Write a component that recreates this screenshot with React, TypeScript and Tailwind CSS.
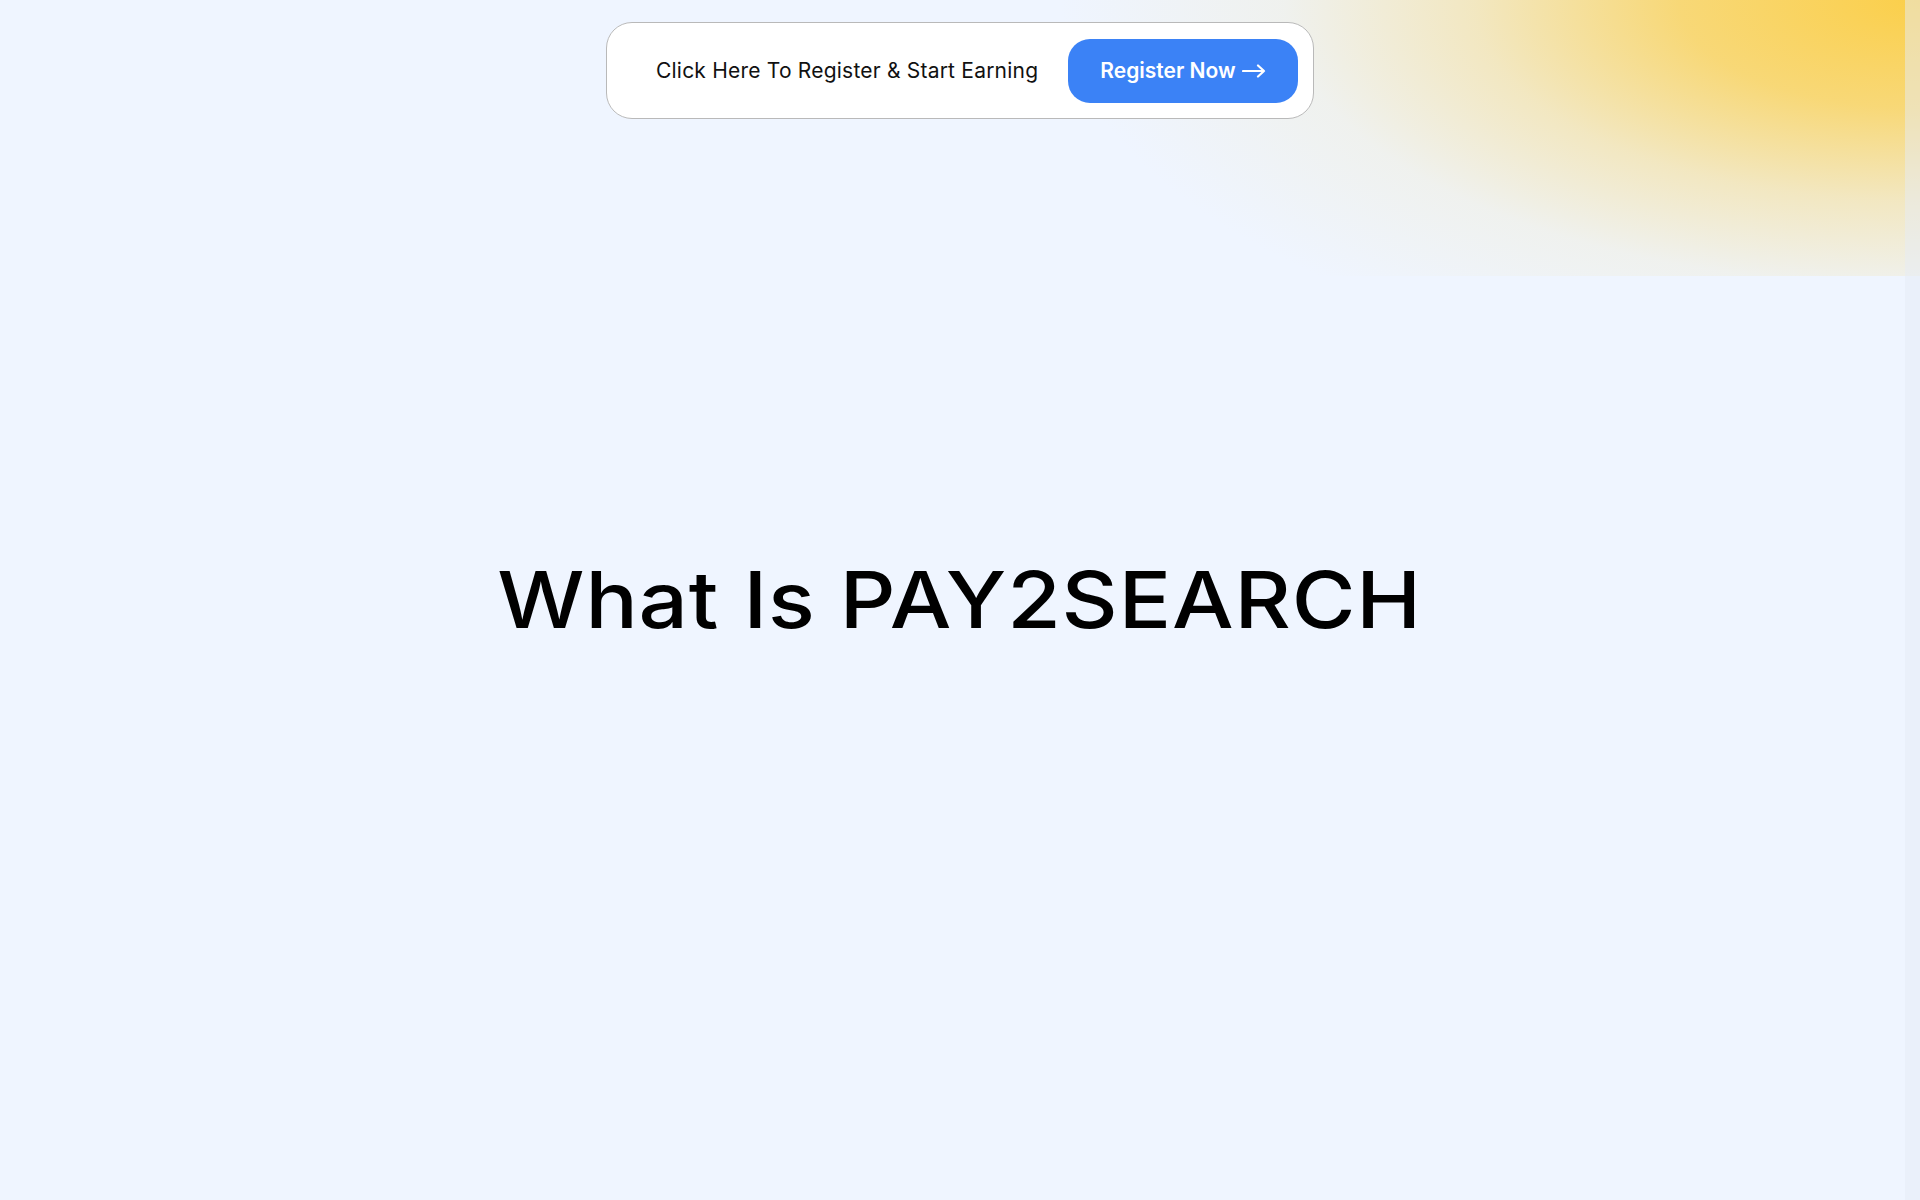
export default function App() {
  return (
    <div className="relative min-h-screen overflow-hidden bg-[#eff5ff] font-['Inter','Liberation_Sans',sans-serif] text-black">
      {/* yellow glow, top right */}
      <div className="pointer-events-none absolute right-0 top-0 h-[276px] w-[860px] overflow-hidden">
        <div className="h-full w-full bg-[radial-gradient(ellipse_100%_140%_at_100%_0%,#fbcf4a_0%,rgba(249,212,100,0.88)_28%,rgba(244,224,160,0.65)_52%,rgba(240,236,215,0.42)_74%,rgba(239,245,255,0)_100%)]" />
      </div>
      <div className="pointer-events-none absolute right-0 top-0 h-full w-[15px] bg-[#e6ebf6]/50" />

      {/* floating register bar */}
      <header className="fixed inset-x-0 top-[22px] z-10 flex justify-center">
        <div className="flex h-[97px] w-[708px] items-center justify-between rounded-[26px] border border-[#b9b9b9] bg-white pl-[49px] pr-[15px]">
          <span className="text-[21px] tracking-[0.01em] text-[#111]">Click Here To Register &amp; Start Earning</span>
          <button className="flex h-[64px] w-[230px] items-center justify-center gap-1.5 rounded-[22px] bg-[#3b82f6] text-[21px] font-semibold text-white">
            Register Now
            <svg width="24" height="14" viewBox="0 0 24 14" fill="none" stroke="currentColor" strokeWidth="2.2" strokeLinecap="round" strokeLinejoin="round">
              <path d="M1 7h21M16 1.5L22 7l-6 5.5" />
            </svg>
          </button>
        </div>
      </header>

      <main className="flex h-screen items-center justify-center">
        <h1 className="scale-x-[1.115] text-[78px] font-medium tracking-[0.01em] leading-none">What Is PAY2SEARCH</h1>
      </main>
    </div>
  );
}
